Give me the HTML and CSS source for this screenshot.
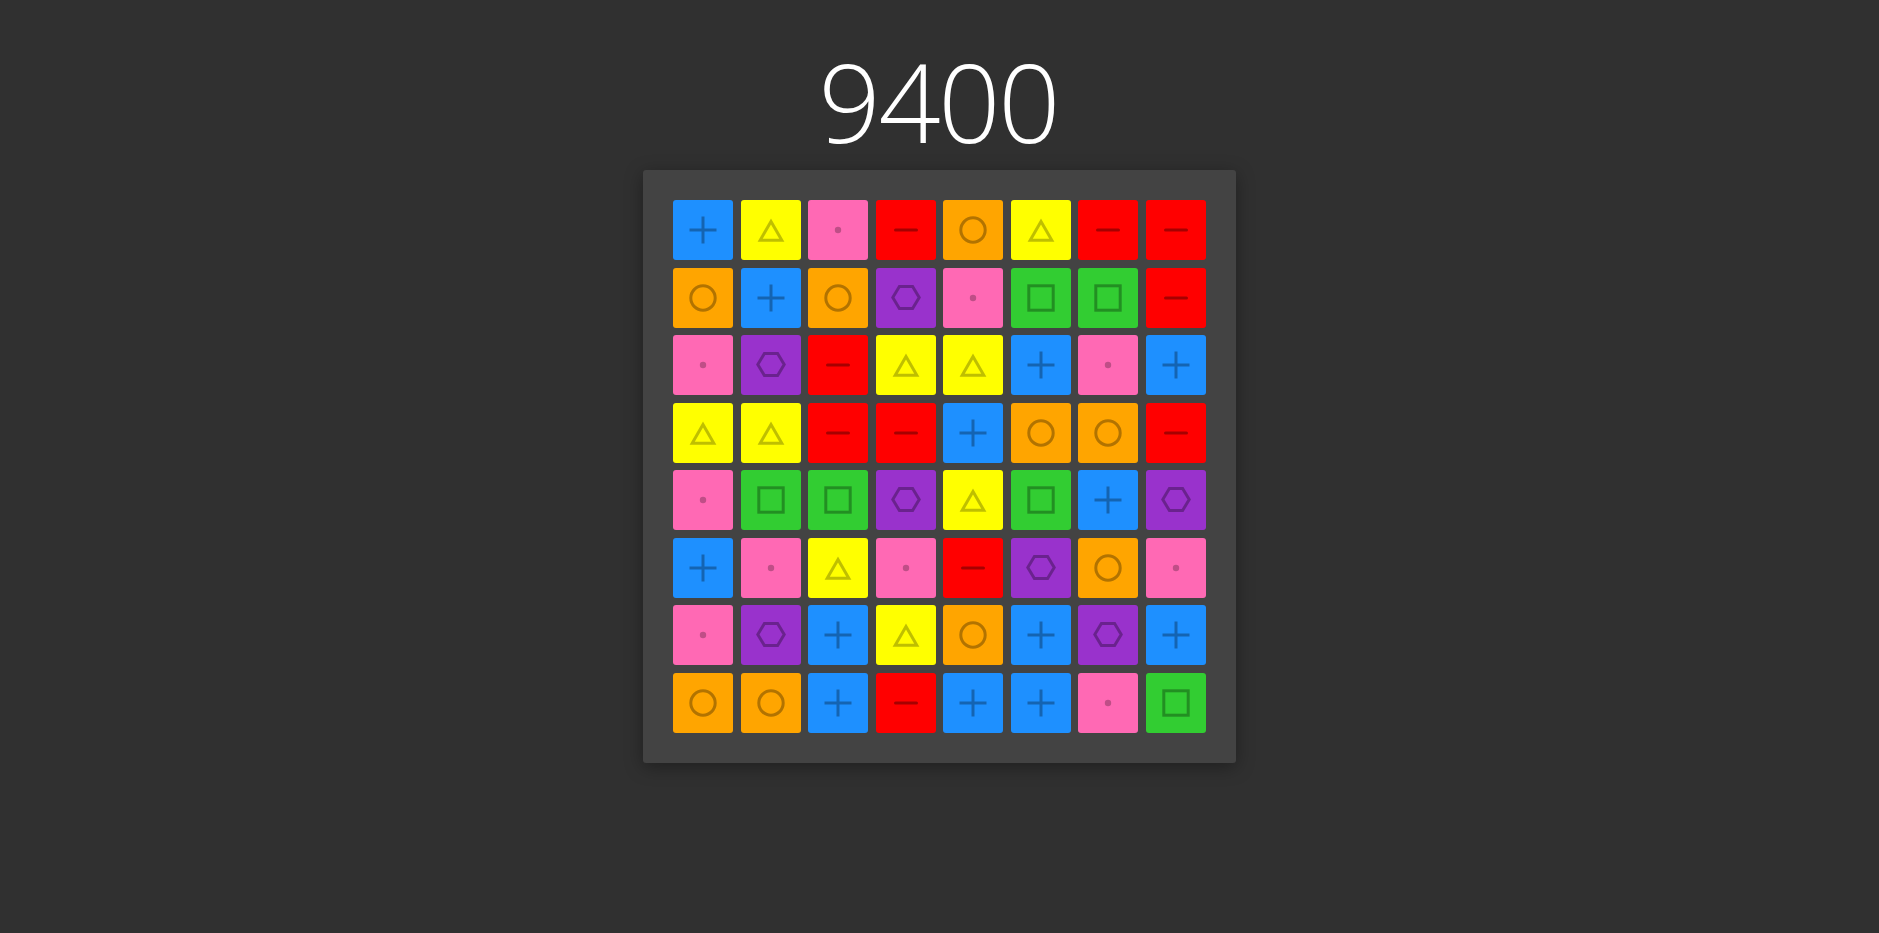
FILE: index.html
```html
<!DOCTYPE html>
<html lang="en">
<head>
<meta charset="utf-8">
<title>9400</title>
<link rel="stylesheet" href="styles.css">
</head>
<body>
<svg class="sprite" width="0" height="0" aria-hidden="true">
  <defs>
    <symbol id="i-plus" viewBox="0 0 60 60"><path d="M16.5 30H43.5M30 16.5V43.5" fill="none" stroke-width="3"/></symbol>
    <symbol id="i-tri" viewBox="0 0 60 60"><path d="M30 21.5L40.8 40.2H19.2Z" fill="none" stroke-width="3" stroke-linejoin="miter"/></symbol>
    <symbol id="i-dot" viewBox="0 0 60 60"><circle cx="30" cy="30" r="3.2" fill="rgba(0,0,0,0.25)" stroke="none"/></symbol>
    <symbol id="i-minus" viewBox="0 0 60 60"><path d="M19.5 30H40.5" fill="none" stroke-width="3" stroke-linecap="round"/></symbol>
    <symbol id="i-circle" viewBox="0 0 60 60"><circle cx="30" cy="30" r="12.2" fill="none" stroke-width="3"/></symbol>
    <symbol id="i-hex" viewBox="0 0 60 60"><path d="M16.8 29.5L23.4 18.5H36.6L43.2 29.5L36.6 40.5H23.4Z" fill="none" stroke-width="3"/></symbol>
    <symbol id="i-square" viewBox="0 0 60 60"><rect x="17.8" y="17.8" width="24.4" height="24.4" fill="none" stroke-width="3"/></symbol>
  </defs>
</svg>
<main class="game">
  <div class="score">9400</div>
  <div class="board">
    <div class="grid">
      <div class="tile blue"><svg><use href="#i-plus"/></svg></div>
      <div class="tile yellow"><svg><use href="#i-tri"/></svg></div>
      <div class="tile pink"><svg><use href="#i-dot"/></svg></div>
      <div class="tile red"><svg><use href="#i-minus"/></svg></div>
      <div class="tile orange"><svg><use href="#i-circle"/></svg></div>
      <div class="tile yellow"><svg><use href="#i-tri"/></svg></div>
      <div class="tile red"><svg><use href="#i-minus"/></svg></div>
      <div class="tile red"><svg><use href="#i-minus"/></svg></div>

      <div class="tile orange"><svg><use href="#i-circle"/></svg></div>
      <div class="tile blue"><svg><use href="#i-plus"/></svg></div>
      <div class="tile orange"><svg><use href="#i-circle"/></svg></div>
      <div class="tile purple"><svg><use href="#i-hex"/></svg></div>
      <div class="tile pink"><svg><use href="#i-dot"/></svg></div>
      <div class="tile green"><svg><use href="#i-square"/></svg></div>
      <div class="tile green"><svg><use href="#i-square"/></svg></div>
      <div class="tile red"><svg><use href="#i-minus"/></svg></div>

      <div class="tile pink"><svg><use href="#i-dot"/></svg></div>
      <div class="tile purple"><svg><use href="#i-hex"/></svg></div>
      <div class="tile red"><svg><use href="#i-minus"/></svg></div>
      <div class="tile yellow"><svg><use href="#i-tri"/></svg></div>
      <div class="tile yellow"><svg><use href="#i-tri"/></svg></div>
      <div class="tile blue"><svg><use href="#i-plus"/></svg></div>
      <div class="tile pink"><svg><use href="#i-dot"/></svg></div>
      <div class="tile blue"><svg><use href="#i-plus"/></svg></div>

      <div class="tile yellow"><svg><use href="#i-tri"/></svg></div>
      <div class="tile yellow"><svg><use href="#i-tri"/></svg></div>
      <div class="tile red"><svg><use href="#i-minus"/></svg></div>
      <div class="tile red"><svg><use href="#i-minus"/></svg></div>
      <div class="tile blue"><svg><use href="#i-plus"/></svg></div>
      <div class="tile orange"><svg><use href="#i-circle"/></svg></div>
      <div class="tile orange"><svg><use href="#i-circle"/></svg></div>
      <div class="tile red"><svg><use href="#i-minus"/></svg></div>

      <div class="tile pink"><svg><use href="#i-dot"/></svg></div>
      <div class="tile green"><svg><use href="#i-square"/></svg></div>
      <div class="tile green"><svg><use href="#i-square"/></svg></div>
      <div class="tile purple"><svg><use href="#i-hex"/></svg></div>
      <div class="tile yellow"><svg><use href="#i-tri"/></svg></div>
      <div class="tile green"><svg><use href="#i-square"/></svg></div>
      <div class="tile blue"><svg><use href="#i-plus"/></svg></div>
      <div class="tile purple"><svg><use href="#i-hex"/></svg></div>

      <div class="tile blue"><svg><use href="#i-plus"/></svg></div>
      <div class="tile pink"><svg><use href="#i-dot"/></svg></div>
      <div class="tile yellow"><svg><use href="#i-tri"/></svg></div>
      <div class="tile pink"><svg><use href="#i-dot"/></svg></div>
      <div class="tile red"><svg><use href="#i-minus"/></svg></div>
      <div class="tile purple"><svg><use href="#i-hex"/></svg></div>
      <div class="tile orange"><svg><use href="#i-circle"/></svg></div>
      <div class="tile pink"><svg><use href="#i-dot"/></svg></div>

      <div class="tile pink"><svg><use href="#i-dot"/></svg></div>
      <div class="tile purple"><svg><use href="#i-hex"/></svg></div>
      <div class="tile blue"><svg><use href="#i-plus"/></svg></div>
      <div class="tile yellow"><svg><use href="#i-tri"/></svg></div>
      <div class="tile orange"><svg><use href="#i-circle"/></svg></div>
      <div class="tile blue"><svg><use href="#i-plus"/></svg></div>
      <div class="tile purple"><svg><use href="#i-hex"/></svg></div>
      <div class="tile blue"><svg><use href="#i-plus"/></svg></div>

      <div class="tile orange"><svg><use href="#i-circle"/></svg></div>
      <div class="tile orange"><svg><use href="#i-circle"/></svg></div>
      <div class="tile blue"><svg><use href="#i-plus"/></svg></div>
      <div class="tile red"><svg><use href="#i-minus"/></svg></div>
      <div class="tile blue"><svg><use href="#i-plus"/></svg></div>
      <div class="tile blue"><svg><use href="#i-plus"/></svg></div>
      <div class="tile pink"><svg><use href="#i-dot"/></svg></div>
      <div class="tile green"><svg><use href="#i-square"/></svg></div>
    </div>
  </div>
</main>
</body>
</html>
```
FILE: styles.css
```css
html, body {
  margin: 0;
  padding: 0;
  height: 100%;
}
body {
  background: #303030;
  font-family: "Open Sans", "Noto Sans", sans-serif;
  color: #fff;
}
.sprite {
  position: absolute;
  width: 0;
  height: 0;
  overflow: hidden;
}
.game {
  display: flex;
  flex-direction: column;
  align-items: center;
  padding-top: 46px;
}
.score {
  font-size: 109px;
  font-weight: 300;
  line-height: 109px;
  height: 109px;
  letter-spacing: -2.3px;
  color: #fff;
  text-indent: -2.3px;
}
.board {
  margin-top: 15px;
  background: #434343;
  border-radius: 3px;
  padding: 30px;
  box-shadow: 0 4px 18px rgba(0, 0, 0, 0.35);
}
.grid {
  display: grid;
  grid-template-columns: repeat(8, 60px);
  grid-auto-rows: 60px;
  gap: 7.5px;
}
.tile {
  width: 60px;
  height: 60px;
  border-radius: 3px;
}
.tile svg {
  display: block;
  width: 60px;
  height: 60px;
  stroke: rgba(0, 0, 0, 0.3);
  fill: none;
}
.blue { background: #1e90ff; }
.yellow { background: #ffff00; }
.pink { background: #ff69b4; }
.red { background: #ff0000; }
.orange { background: #ffa500; }
.purple { background: #9932cc; }
.green { background: #32cd32; }
.yellow svg { stroke: rgba(0, 0, 0, 0.25); }
.red svg { stroke: rgba(0, 0, 0, 0.35); }
```
